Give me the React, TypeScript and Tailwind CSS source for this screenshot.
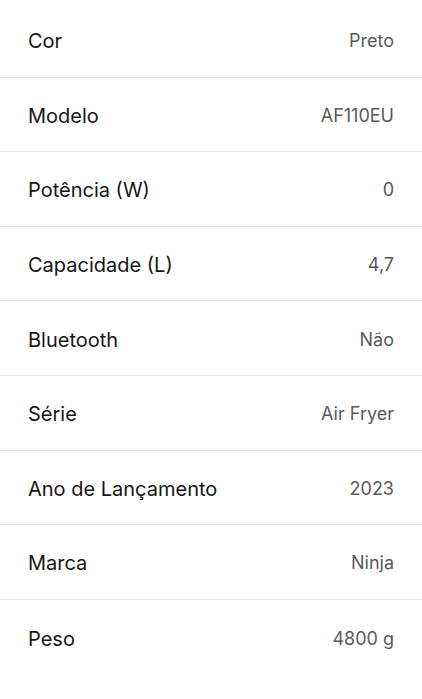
import React from 'react';

const specs: { label: string; value: string }[] = [
  { label: 'Cor', value: 'Preto' },
  { label: 'Modelo', value: 'AF110EU' },
  { label: 'Potência (W)', value: '0' },
  { label: 'Capacidade (L)', value: '4,7' },
  { label: 'Bluetooth', value: 'Não' },
  { label: 'Série', value: 'Air Fryer' },
  { label: 'Ano de Lançamento', value: '2023' },
  { label: 'Marca', value: 'Ninja' },
  { label: 'Peso', value: '4800 g' },
];

const App: React.FC = () => {
  return (
    <div className="min-h-screen bg-white font-['Inter',sans-serif]">
      <ul className="pt-[3px]">
        {specs.map((spec, i) => (
          <li
            key={spec.label}
            className={`flex items-center justify-between pl-[28px] pr-[28px] pt-[3px] h-[74.6px] ${
              i < specs.length - 1 ? 'border-b border-[#e2e2e2]' : ''
            }`}
          >
            <span className="text-[20px] leading-[28px] text-[#161616]">{spec.label}</span>
            <span className="text-[18px] leading-[28px] text-[#5a5a5a]">{spec.value}</span>
          </li>
        ))}
      </ul>
    </div>
  );
};

export default App;
